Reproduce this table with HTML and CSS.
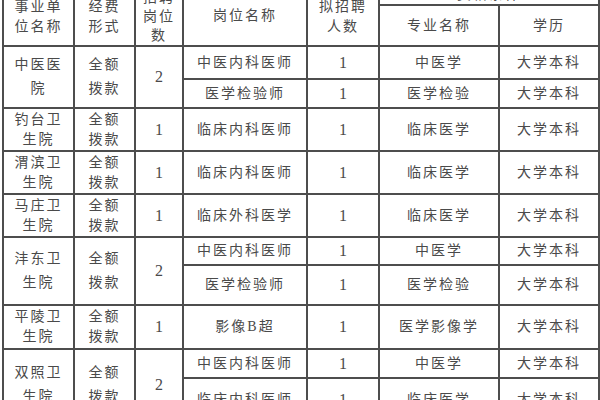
FILE: index.html
```html
<!DOCTYPE html>
<html lang="zh-CN">
<head>
<meta charset="utf-8">
<title>招聘岗位表</title>
<link rel="stylesheet" href="styles.css">
</head>
<body>
<div class="page">
<table class="grid">
  <colgroup>
    <col class="c1"><col class="c2"><col class="c3"><col class="c4"><col class="c5"><col class="c6"><col class="c7">
  </colgroup>
  <thead>
    <tr class="h1">
      <th rowspan="2">事业单<br>位名称</th>
      <th rowspan="2">经费<br>形式</th>
      <th rowspan="2" class="tight">招聘<br>岗位<br>数</th>
      <th rowspan="2" class="up">岗位名称</th>
      <th rowspan="2">拟招聘<br>人数</th>
      <th colspan="2" class="small">资格条件</th>
    </tr>
    <tr class="h2">
      <th>专业名称</th>
      <th>学历</th>
    </tr>
  </thead>
  <tbody>
    <tr class="r33">
      <td rowspan="2" class="tall">中医医<br>院</td>
      <td rowspan="2" class="tall">全额<br>拨款</td>
      <td rowspan="2" class="num">2</td>
      <td>中医内科医师</td><td class="num">1</td><td>中医学</td><td>大学本科</td>
    </tr>
    <tr class="r29">
      <td>医学检验师</td><td class="num">1</td><td>医学检验</td><td>大学本科</td>
    </tr>
    <tr class="r43">
      <td>钓台卫<br>生院</td><td>全额<br>拨款</td><td class="num">1</td>
      <td>临床内科医师</td><td class="num">1</td><td>临床医学</td><td>大学本科</td>
    </tr>
    <tr class="r43">
      <td>渭滨卫<br>生院</td><td>全额<br>拨款</td><td class="num">1</td>
      <td>临床内科医师</td><td class="num">1</td><td>临床医学</td><td>大学本科</td>
    </tr>
    <tr class="r43">
      <td>马庄卫<br>生院</td><td>全额<br>拨款</td><td class="num">1</td>
      <td>临床外科医学</td><td class="num">1</td><td>临床医学</td><td>大学本科</td>
    </tr>
    <tr class="r28">
      <td rowspan="2" class="tall">沣东卫<br>生院</td>
      <td rowspan="2" class="tall">全额<br>拨款</td>
      <td rowspan="2" class="num">2</td>
      <td>中医内科医师</td><td class="num">1</td><td>中医学</td><td>大学本科</td>
    </tr>
    <tr class="r40">
      <td>医学检验师</td><td class="num">1</td><td>医学检验</td><td>大学本科</td>
    </tr>
    <tr class="r44">
      <td>平陵卫<br>生院</td><td>全额<br>拨款</td><td class="num">1</td>
      <td>影像B超</td><td class="num">1</td><td>医学影像学</td><td>大学本科</td>
    </tr>
    <tr class="r29">
      <td rowspan="2" class="tall">双照卫<br>生院</td>
      <td rowspan="2" class="tall">全额<br>拨款</td>
      <td rowspan="2" class="num">2</td>
      <td>中医内科医师</td><td class="num">1</td><td>中医学</td><td>大学本科</td>
    </tr>
    <tr class="r43">
      <td>临床内科医师</td><td class="num">1</td><td>临床医学</td><td>大学本科</td>
    </tr>
  </tbody>
</table>
</div>
</body>
</html>
```
FILE: styles.css
```css
html, body {
  margin: 0;
  padding: 0;
  background: #ffffff;
}

.page {
  width: 600px;
  height: 400px;
  overflow: hidden;
  padding-left: 2px;
  box-sizing: border-box;
}

.grid {
  margin-top: -14px;
  border-collapse: collapse;
  table-layout: fixed;
  width: 596px;
  font-family: "Liberation Serif", "Noto Sans CJK SC", serif;
  font-size: 14px;
  color: #4a4a4a;
}

.c1 { width: 71px; }
.c2 { width: 61px; }
.c3 { width: 48px; }
.c4 { width: 124px; }
.c5 { width: 72px; }
.c6 { width: 120px; }
.c7 { width: 100px; }

.grid th,
.grid td {
  border: 2px solid #4d4d4d;
  padding: 0;
  text-align: center;
  vertical-align: middle;
  line-height: 20px;
  letter-spacing: 2px;
  font-weight: normal;
  overflow: hidden;
  white-space: nowrap;
}

.grid .num {
  font-size: 16px;
  letter-spacing: 0;
}

.grid .tall {
  line-height: 24px;
}

.grid .tight {
  line-height: 19px;
}

.grid .small {
  line-height: 14px;
  vertical-align: top;
}

.grid .up {
  vertical-align: top;
  padding-top: 18px;
}

.h1 { height: 18px; }
.h2 { height: 41px; }
.r28 { height: 28px; }
.r29 { height: 29px; }
.r33 { height: 33px; }
.r40 { height: 40px; }
.r43 { height: 43px; }
.r44 { height: 44px; }
```
